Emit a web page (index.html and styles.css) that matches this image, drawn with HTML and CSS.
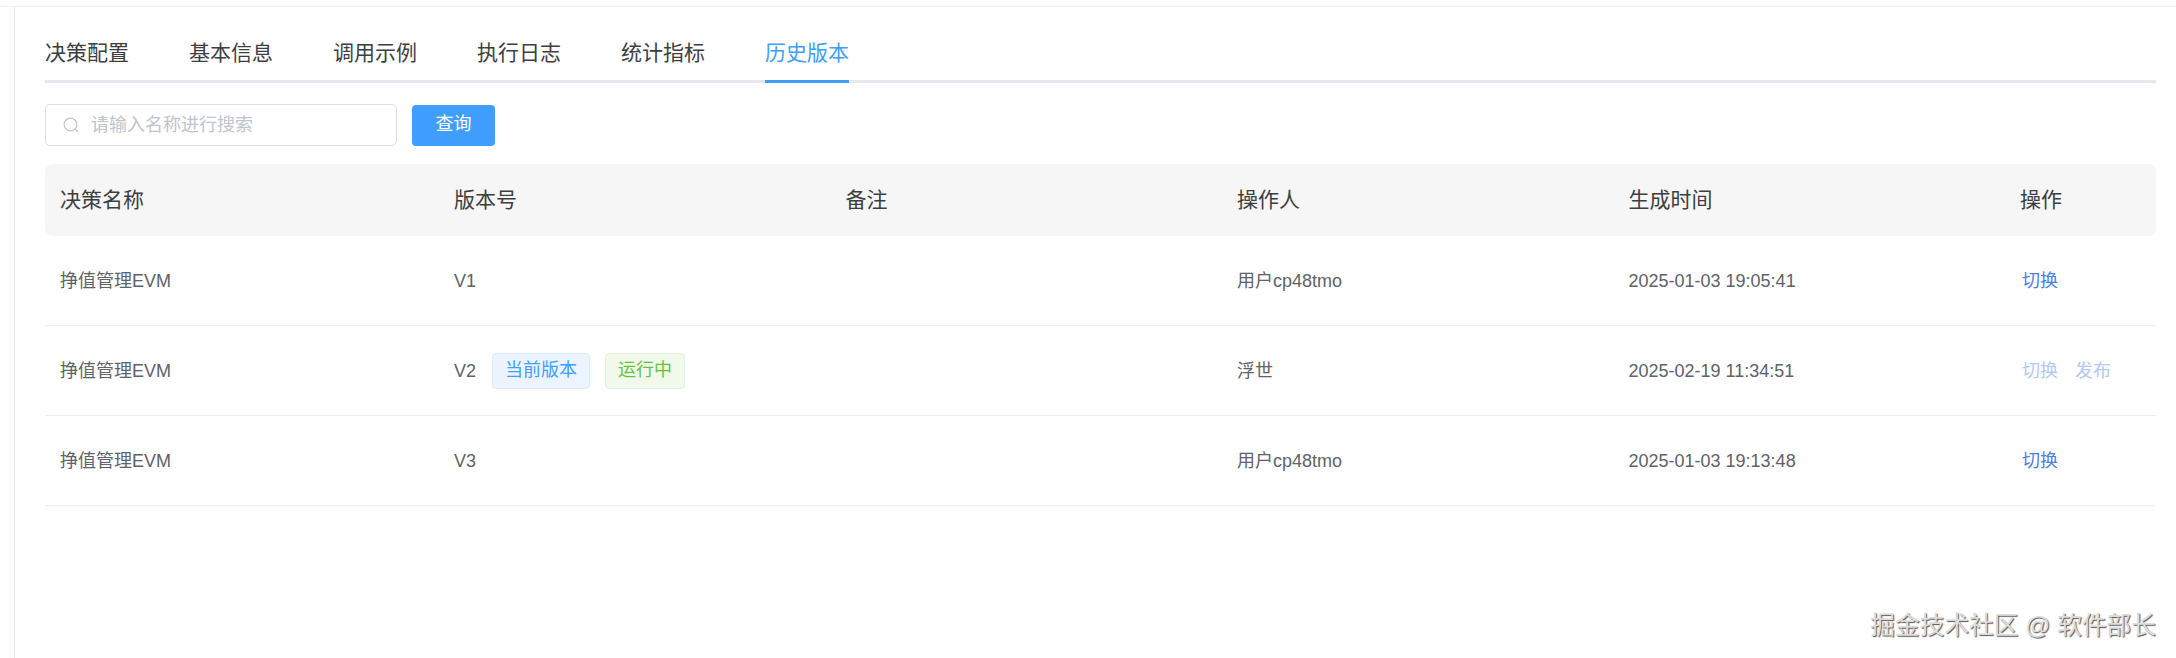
FILE: index.html
```html
<!DOCTYPE html>
<html lang="zh-CN">
<head>
    <meta charset="UTF-8">
    <meta name="viewport" content="width=device-width, initial-scale=1.0">
    <title>历史版本</title>
    <link rel="stylesheet" href="styles.css">
</head>
<body>
    <div class="top-strip"></div>

    <div class="main">
        <!-- Tabs -->
        <div class="tabs">
            <a class="tab">决策配置</a>
            <a class="tab">基本信息</a>
            <a class="tab">调用示例</a>
            <a class="tab">执行日志</a>
            <a class="tab">统计指标</a>
            <a class="tab active">历史版本</a>
        </div>

        <!-- Search bar -->
        <div class="search-bar">
            <div class="search-input">
                <svg class="search-icon" viewBox="0 0 16 16" width="16" height="16" fill="none" stroke="#c0c4cc" stroke-width="1.2">
                    <circle cx="7.5" cy="7.5" r="6.4"/>
                    <path d="M12.2 12.2 L15 15"/>
                </svg>
                <span class="placeholder">请输入名称进行搜索</span>
            </div>
            <button class="search-btn">查询</button>
        </div>

        <table class="version-table">
            <thead>
                <tr>
                    <th class="col-name">决策名称</th>
                    <th class="col-std">版本号</th>
                    <th class="col-std">备注</th>
                    <th class="col-std">操作人</th>
                    <th class="col-std">生成时间</th>
                    <th>操作</th>
                </tr>
            </thead>
            <tbody>
                <tr>
                    <td>挣值管理EVM</td>
                    <td>V1</td>
                    <td></td>
                    <td>用户cp48tmo</td>
                    <td>2025-01-03 19:05:41</td>
                    <td><div class="action-cell"><a class="link">切换</a></div></td>
                </tr>
                <tr>
                    <td>挣值管理EVM</td>
                    <td>
                        <div class="version-cell">
                            <span class="version-no">V2</span>
                            <span class="tag tag-blue">当前版本</span>
                            <span class="tag tag-green">运行中</span>
                        </div>
                    </td>
                    <td></td>
                    <td>浮世</td>
                    <td>2025-02-19 11:34:51</td>
                    <td>
                        <div class="action-cell">
                            <a class="link disabled">切换</a>
                            <a class="link disabled">发布</a>
                        </div>
                    </td>
                </tr>
                <tr>
                    <td>挣值管理EVM</td>
                    <td>V3</td>
                    <td></td>
                    <td>用户cp48tmo</td>
                    <td>2025-01-03 19:13:48</td>
                    <td><div class="action-cell"><a class="link">切换</a></div></td>
                </tr>
            </tbody>
        </table>
    </div>

    <div class="watermark">掘金技术社区 @ 软件部长</div>
</body>
</html>
```

FILE: styles.css
```css
html, body {
    height: 100%;
}

body {
    margin: 0;
    background-color: #fff;
    font-family: "Liberation Sans", "Noto Sans CJK SC", sans-serif;
    font-size: 18px;
    line-height: 24px;
    color: #606266;
    overflow: hidden;
}

.top-strip {
    height: 7px;
    box-sizing: border-box;
    border-bottom: 1px solid #eff0f3;
}

.main {
    margin-left: 14px;
    padding: 0 20px 0 30px;
    height: 651px;
    box-sizing: border-box;
    border-left: 1px solid #e9ebef;
}

/* Tabs */
.tabs {
    display: flex;
    gap: 60px;
    height: 76px;
    box-sizing: border-box;
    border-bottom: 3px solid #e4e7ed;
}

.tab {
    height: 76px;
    box-sizing: border-box;
    padding-top: 31px;
    font-size: 21px;
    line-height: 30px;
    color: #3c3e42;
}

.tab.active {
    color: #409eff;
    border-bottom: 3px solid #409eff;
}

/* Search bar */
.search-bar {
    display: flex;
    align-items: flex-end;
    gap: 15px;
    margin-top: 21px;
}

.search-input {
    display: flex;
    align-items: center;
    width: 352px;
    height: 42px;
    box-sizing: border-box;
    padding-left: 17px;
    border: 1px solid #dcdfe6;
    border-radius: 5px;
}

.search-icon {
    margin-right: 12px;
}

.placeholder {
    color: #c0c4cc;
}

.search-btn {
    width: 83px;
    height: 41px;
    padding: 0 0 3px;
    border: none;
    border-radius: 4px;
    background-color: #409eff;
    color: #fff;
    font-family: inherit;
    font-size: 18px;
    line-height: 24px;
}

/* Table */
.version-table {
    width: 2111px;
    margin-top: 18px;
    border-collapse: separate;
    border-spacing: 0;
    table-layout: fixed;
}

.version-table th {
    height: 72px;
    padding: 0 0 0 15px;
    background-color: #f6f6f6;
    font-size: 21px;
    font-weight: normal;
    line-height: 28px;
    text-align: left;
    color: #3c3e42;
}

.version-table th:first-child {
    border-radius: 8px 0 0 8px;
}

.version-table th:last-child {
    border-radius: 0 8px 8px 0;
}

.col-name {
    width: 379px;
}

.col-std {
    width: 376.5px;
}

.version-table td {
    height: 89px;
    padding: 0 0 0 15px;
    border-bottom: 1px solid #ebeef5;
}

.version-cell {
    display: flex;
    align-items: center;
    gap: 15px;
}

.version-no {
    margin-right: 1px;
}

.tag {
    height: 36px;
    box-sizing: border-box;
    padding: 0 12px;
    border: 1px solid;
    border-radius: 4px;
    line-height: 33px;
}

.tag-blue {
    background-color: #ecf5ff;
    border-color: #d9ecff;
    color: #409eff;
}

.tag-green {
    background-color: #f0f9eb;
    border-color: #e1f3d8;
    color: #67c23a;
}

.action-cell {
    display: flex;
    gap: 17px;
    padding-left: 2px;
}

.link {
    color: #4a7fe5;
}

.link.disabled {
    color: #b3c8f3;
}

/* Juejin watermark, lies over the page */
.watermark {
    position: absolute;
    right: 20px;
    bottom: 17px;
    font-size: 24.7px;
    line-height: 30px;
    color: #dcdcdc;
    text-shadow: 1px 1px 1px #555;
}
```
